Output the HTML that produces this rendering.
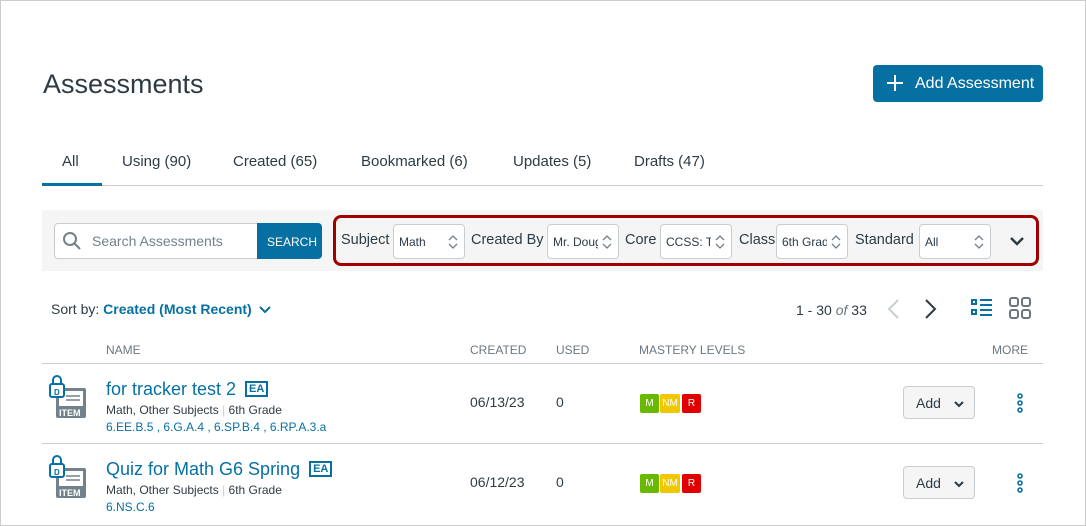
<!DOCTYPE html>
<html><head><style>
*{box-sizing:border-box;margin:0;padding:0}
body{width:1086px;height:526px;background:#fff;font-family:"Liberation Sans",sans-serif;color:#2d3b45;position:relative;overflow:hidden}
.a{position:absolute;white-space:nowrap}
.sel{position:absolute;top:224px;height:35px;border:1px solid #c7cdd1;border-radius:4px;background:#fff;font-size:12px;padding:10px 0 0 5px;overflow:hidden;color:#2d3b45;white-space:nowrap}
.sel:after{content:"";position:absolute;right:0;top:0;width:20px;height:100%;background:#fff}
.arr{position:absolute;top:7px;right:6px;z-index:2}
.lbl{position:absolute;top:232px;font-size:14.5px;color:#2d3b45;white-space:nowrap}
.badge{display:inline-block;width:19px;text-align:center;height:19px;line-height:19px;font-size:10px;color:#fff;border-radius:2px}
.add{position:absolute;left:903px;width:72px;height:33px;border:1px solid #c7cdd1;border-radius:4px;background:#f5f5f5;font-size:14px;padding:8px 0 0 12px}
.hdr{position:absolute;top:343px;font-size:12px;color:#6b7780}
</style></head><body>
<div class="a" style="left:0;top:0;width:1086px;height:526px;border:1px solid #ccc"></div>
<div class="a" style="left:43px;top:69px;font-size:27px;color:#2d3b45">Assessments</div>
<div class="a" style="left:873px;top:65px;width:170px;height:37px;background:#0770a3;border-radius:4px;color:#fff;font-size:16px;padding:10px 0 0 42px">Add Assessment</div>
<div class="a" style="left:887px;top:82px;width:16px;height:2px;background:#fff"></div>
<div class="a" style="left:894px;top:75px;width:2px;height:16px;background:#fff"></div>

<div class="a" style="left:62px;top:153px;font-size:15px">All</div>
<div class="a" style="left:122px;top:153px;font-size:15px">Using (90)</div>
<div class="a" style="left:233px;top:153px;font-size:15px">Created (65)</div>
<div class="a" style="left:361px;top:153px;font-size:15px">Bookmarked (6)</div>
<div class="a" style="left:513px;top:153px;font-size:15px">Updates (5)</div>
<div class="a" style="left:634px;top:153px;font-size:15px">Drafts (47)</div>
<div class="a" style="left:42px;top:185px;width:1001px;height:1px;background:#c7cdd1"></div>
<div class="a" style="left:42px;top:183px;width:60px;height:3px;background:#0770a3"></div>

<div class="a" style="left:42px;top:210px;width:1001px;height:61px;background:#f5f5f5"></div>
<div class="a" style="left:54px;top:223px;width:204px;height:36px;background:#fff;border:1px solid #c7cdd1;border-radius:4px 0 0 4px"></div>
<svg class="a" style="left:62px;top:231px" width="20" height="20" viewBox="0 0 20 20"><circle cx="8" cy="8" r="6" fill="none" stroke="#73818c" stroke-width="2"/><path d="M12.5 12.5L18 18" stroke="#73818c" stroke-width="2"/></svg>
<div class="a" style="left:92px;top:233px;font-size:14px;color:#73818c">Search Assessments</div>
<div class="a" style="left:257px;top:223px;width:65px;height:36px;background:#0770a3;border-radius:0 4px 4px 0;color:#fff;font-size:12px;padding:12px 0 0 10px">SEARCH</div>

<div class="a" style="left:333px;top:215px;width:706px;height:51px;border:3px solid #a00000;border-radius:8px"></div>
<div class="lbl" style="left:341px">Subject</div>
<div class="sel" style="left:393px;width:72px">Math<svg class="arr" width="10" height="20" viewBox="0 0 10 20"><path d="M1 8l4-4 4 4M1 12l4 4 4-4" fill="none" stroke="#73818c" stroke-width="1.3"/></svg></div>
<div class="lbl" style="left:471px">Created By</div>
<div class="sel" style="left:547px;width:72px">Mr. Douglas<svg class="arr" width="10" height="20" viewBox="0 0 10 20"><path d="M1 8l4-4 4 4M1 12l4 4 4-4" fill="none" stroke="#73818c" stroke-width="1.3"/></svg></div>
<div class="lbl" style="left:625px">Core</div>
<div class="sel" style="left:660px;width:72px">CCSS: Texas<svg class="arr" width="10" height="20" viewBox="0 0 10 20"><path d="M1 8l4-4 4 4M1 12l4 4 4-4" fill="none" stroke="#73818c" stroke-width="1.3"/></svg></div>
<div class="lbl" style="left:739px">Class</div>
<div class="sel" style="left:776px;width:72px">6th Grade<svg class="arr" width="10" height="20" viewBox="0 0 10 20"><path d="M1 8l4-4 4 4M1 12l4 4 4-4" fill="none" stroke="#73818c" stroke-width="1.3"/></svg></div>
<div class="lbl" style="left:855px">Standard</div>
<div class="sel" style="left:919px;width:72px">All<svg class="arr" width="10" height="20" viewBox="0 0 10 20"><path d="M1 8l4-4 4 4M1 12l4 4 4-4" fill="none" stroke="#73818c" stroke-width="1.3"/></svg></div>
<svg class="a" style="left:1009px;top:236px" width="16" height="10" viewBox="0 0 16 10"><path d="M2 2l6 6 6-6" fill="none" stroke="#2d3b45" stroke-width="2.5"/></svg>

<div class="a" style="left:51px;top:301px;font-size:14px">Sort by: <b style="color:#0770a3">Created (Most Recent)</b></div>
<svg class="a" style="left:258px;top:305px" width="14" height="10" viewBox="0 0 14 10"><path d="M2 2l5 5 5-5" fill="none" stroke="#0770a3" stroke-width="2"/></svg>
<div class="a" style="left:796px;top:302px;font-size:14px">1 - 30 <i style="color:#6b7780">of</i> 33</div>
<svg class="a" style="left:886px;top:298px" width="14" height="22" viewBox="0 0 14 22"><path d="M12 2L3 11l9 9" fill="none" stroke="#c7cdd1" stroke-width="2"/></svg>
<svg class="a" style="left:924px;top:298px" width="14" height="22" viewBox="0 0 14 22"><path d="M2 2l9 9-9 9" fill="none" stroke="#2d3b45" stroke-width="2"/></svg>
<svg class="a" style="left:971px;top:298px" width="22" height="20" viewBox="0 0 22 20"><g fill="none" stroke="#0770a3" stroke-width="2"><rect x="1" y="2" width="4" height="4"/><rect x="1" y="12" width="4" height="4"/><path d="M9 2h12M9 7h12M9 12h12M9 17h12"/></g></svg>
<svg class="a" style="left:1009px;top:297px" width="22" height="22" viewBox="0 0 22 22"><g fill="none" stroke="#6b7780" stroke-width="2"><rect x="1" y="1" width="8" height="8" rx="2"/><rect x="13" y="1" width="8" height="8" rx="2"/><rect x="1" y="13" width="8" height="8" rx="2"/><rect x="13" y="13" width="8" height="8" rx="2"/></g></svg>

<div class="hdr" style="left:106px">NAME</div>
<div class="hdr" style="left:470px">CREATED</div>
<div class="hdr" style="left:556px">USED</div>
<div class="hdr" style="left:639px">MASTERY LEVELS</div>
<div class="hdr" style="left:992px">MORE</div>
<div class="a" style="left:42px;top:363px;width:1001px;height:1px;background:#c7cdd1"></div>
<div class="a" style="left:42px;top:443px;width:1001px;height:1px;background:#c7cdd1"></div>

<!-- row 1 -->
<svg class="a" style="left:48px;top:374px" width="42" height="46" viewBox="0 0 42 46"><rect x="8" y="14" width="30" height="30" rx="2" fill="#73818c"/><rect x="11" y="17" width="24" height="15" fill="#fff"/><path d="M18 22h14M18 26h14" stroke="#73818c" stroke-width="1.5"/><text x="11" y="42" font-size="9" font-weight="bold" fill="#fff" font-family="Liberation Sans">ITEM</text><rect x="2" y="10" width="14" height="13" rx="2" fill="#fff" stroke="#0770a3" stroke-width="2"/><path d="M5 10V6a4 4 0 0 1 8 0v4" fill="none" stroke="#0770a3" stroke-width="2"/><text x="6" y="21" font-size="8" font-weight="bold" fill="#0770a3" font-family="Liberation Sans">D</text></svg>
<div class="a" style="left:106px;top:379px;font-size:18px;color:#0770a3">for tracker test 2 <span style="display:inline-block;font-size:11px;font-weight:bold;border:2px solid #0770a3;padding:0 2px;line-height:12px;vertical-align:3px;margin-left:4px">EA</span></div>
<div class="a" style="left:106px;top:403px;font-size:12px">Math, Other Subjects <span style="color:#c7cdd1">|</span> 6th Grade</div>
<div class="a" style="left:106px;top:420px;font-size:12px;color:#0770a3">6.EE.B.5 , 6.G.A.4 , 6.SP.B.4 , 6.RP.A.3.a</div>
<div class="a" style="left:470px;top:394px;font-size:14px">06/13/23</div>
<div class="a" style="left:556px;top:394px;font-size:14px">0</div>
<div class="a" style="left:640px;top:393px"><span class="badge" style="background:#6ab800">M</span><span class="badge" style="background:#f0c800;margin-left:1px;width:20px">NM</span><span class="badge" style="background:#e00000;margin-left:2px">R</span></div>
<div class="add" style="top:386px">Add<svg style="position:absolute;left:50px;top:13px" width="10" height="8" viewBox="0 0 10 8"><path d="M1 2l4 4 4-4" fill="none" stroke="#2d3b45" stroke-width="2"/></svg></div>
<svg class="a" style="left:1016px;top:393px" width="8" height="20" viewBox="0 0 8 20"><g fill="none" stroke="#0770a3" stroke-width="1.6"><circle cx="4" cy="3" r="2"/><circle cx="4" cy="10" r="2"/><circle cx="4" cy="17" r="2"/></g></svg>

<!-- row 2 -->
<svg class="a" style="left:48px;top:454px" width="42" height="46" viewBox="0 0 42 46"><rect x="8" y="14" width="30" height="30" rx="2" fill="#73818c"/><rect x="11" y="17" width="24" height="15" fill="#fff"/><path d="M18 22h14M18 26h14" stroke="#73818c" stroke-width="1.5"/><text x="11" y="42" font-size="9" font-weight="bold" fill="#fff" font-family="Liberation Sans">ITEM</text><rect x="2" y="10" width="14" height="13" rx="2" fill="#fff" stroke="#0770a3" stroke-width="2"/><path d="M5 10V6a4 4 0 0 1 8 0v4" fill="none" stroke="#0770a3" stroke-width="2"/><text x="6" y="21" font-size="8" font-weight="bold" fill="#0770a3" font-family="Liberation Sans">D</text></svg>
<div class="a" style="left:106px;top:459px;font-size:18px;color:#0770a3">Quiz for Math G6 Spring <span style="display:inline-block;font-size:11px;font-weight:bold;border:2px solid #0770a3;padding:0 2px;line-height:12px;vertical-align:3px;margin-left:4px">EA</span></div>
<div class="a" style="left:106px;top:483px;font-size:12px">Math, Other Subjects <span style="color:#c7cdd1">|</span> 6th Grade</div>
<div class="a" style="left:106px;top:500px;font-size:12px;color:#0770a3">6.NS.C.6</div>
<div class="a" style="left:470px;top:474px;font-size:14px">06/12/23</div>
<div class="a" style="left:556px;top:474px;font-size:14px">0</div>
<div class="a" style="left:640px;top:473px"><span class="badge" style="background:#6ab800">M</span><span class="badge" style="background:#f0c800;margin-left:1px;width:20px">NM</span><span class="badge" style="background:#e00000;margin-left:2px">R</span></div>
<div class="add" style="top:466px">Add<svg style="position:absolute;left:50px;top:13px" width="10" height="8" viewBox="0 0 10 8"><path d="M1 2l4 4 4-4" fill="none" stroke="#2d3b45" stroke-width="2"/></svg></div>
<svg class="a" style="left:1016px;top:473px" width="8" height="20" viewBox="0 0 8 20"><g fill="none" stroke="#0770a3" stroke-width="1.6"><circle cx="4" cy="3" r="2"/><circle cx="4" cy="10" r="2"/><circle cx="4" cy="17" r="2"/></g></svg>
</body></html>
